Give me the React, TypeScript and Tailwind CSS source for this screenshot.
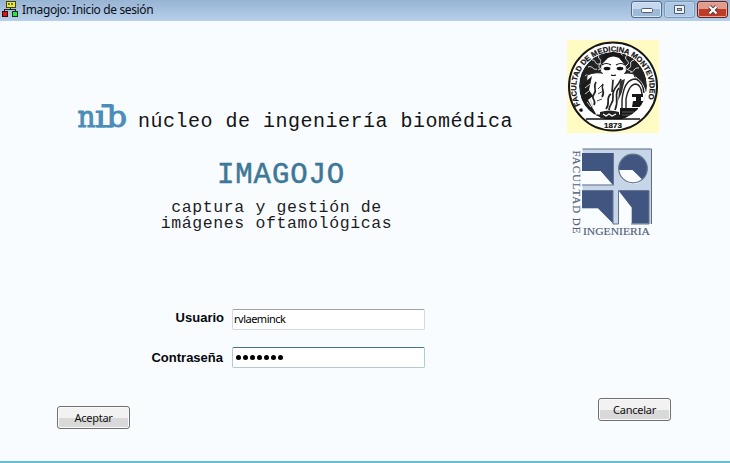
import React from "react";

function AppIcon() {
  return (
    <svg className="ml-0.5 block h-[18px] w-4 shrink-0" viewBox="0 0 16 18" shapeRendering="crispEdges">
      <path d="M8 7v3M2.5 12v-2.5h11V12" fill="none" stroke="#222" />
      <rect x="4" y="1" width="9" height="6" fill="#e8e840" stroke="#44440c" />
      <rect x="6" y="3" width="5" height="2" fill="#6b7a20" />
      <rect x="8" y="3" width="1" height="2" fill="#f6f67a" />
      <rect x="0.5" y="11.5" width="5" height="5" fill="#d81414" stroke="#3a0a0a" />
      <rect x="10.5" y="11.5" width="5" height="5" fill="#2fe04a" stroke="#0b3a12" />
    </svg>
  );
}

function TitleBar() {
  return (
    <header className="flex h-[21px] items-start bg-linear-to-b from-[#98b4d3] to-[#b7cfe9]">
      <AppIcon />
      <h1 className="ml-1 pt-[2px] font-['Noto_Sans',sans-serif] text-[12px] leading-4 tracking-[-0.37px] text-[#0b0f18]">
        Imagojo: Inicio de sesión
      </h1>
      <div className="mt-px mr-[2px] ml-auto flex gap-[2px]">
        <button className="flex h-[17px] w-[31px] items-center justify-center rounded-[3px] border border-[#506a8c] bg-linear-to-b from-[#c5d8ed] from-50% to-[#9dbad9] to-50% shadow-[inset_0_0_0_1px_#d8e6f4]" aria-label="Minimizar">
          <svg className="mt-[3px] h-[6px] w-3" viewBox="0 0 12 6">
            <rect x="0.5" y="0.5" width="11" height="4" rx="1" fill="#fff" stroke="#535c6b" />
          </svg>
        </button>
        <button className="flex h-[17px] w-[31px] items-center justify-center rounded-[3px] border border-[#7f9bbb] bg-[#adc8e4] shadow-[inset_0_0_0_1px_#bed4ea]" aria-label="Maximizar">
          <svg className="h-[9px] w-[11px]" viewBox="0 0 11 9">
            <rect x="0.5" y="0.5" width="10" height="8" rx="0.5" fill="#eef3f8" stroke="#535c6b" />
            <rect x="3.5" y="3.5" width="4" height="2" fill="#b9cce0" stroke="#535c6b" />
          </svg>
        </button>
        <button className="flex h-[17px] w-[31px] items-center justify-center rounded-[3px] border border-[#64231f] bg-linear-to-b from-[#df9c8d] from-45% to-[#be3b26] to-50% shadow-[inset_0_0_0_1px_#e8a99c]" aria-label="Cerrar">
          <svg className="h-[10px] w-3" viewBox="0 0 12 10">
            <path d="M2.5 1.5l7 7M9.5 1.5l-7 7" stroke="#523d45" strokeWidth="4" />
            <path d="M2.5 1.5l7 7M9.5 1.5l-7 7" stroke="#fff" strokeWidth="2.2" />
          </svg>
        </button>
      </div>
    </header>
  );
}

function NibLogo() {
  return (
    <svg className="-my-2 block h-12 w-[52px] shrink-0" viewBox="0 -8 52 48">
      <g fill="#4b8db9" stroke="#4b8db9" strokeWidth="1" fontFamily="'DejaVu Serif', serif" fontSize="29">
        <text x="0.6" y="25" textLength="18" lengthAdjust="spacingAndGlyphs">n</text>
        <text x="18" y="25" textLength="11" lengthAdjust="spacingAndGlyphs">ı</text>
        <text x="29.5" y="25" textLength="20.5" lengthAdjust="spacingAndGlyphs">b</text>
        <path d="M24.5 2H35v3.5H24.5zM20 23h15v2.5H20z" stroke="none" />
      </g>
    </svg>
  );
}

function MedicineSeal() {
  return (
    <svg className="block h-[93px] w-[92px]" viewBox="0 0 92 93">
      <defs>
        <path id="seal-arc" d="M17.5 71.5A36.7 36.7 0 1 1 75.5 70" />
        <clipPath id="seal-inner">
          <circle cx="46" cy="46" r="34" />
        </clipPath>
      </defs>
      <rect width="92" height="93" fill="#fffbc3" />
      <circle cx="46" cy="46.5" r="44" fill="#fff" stroke="#161616" strokeWidth="2" />
      <text fontFamily="'Liberation Sans', sans-serif" fontSize="7.6" fontWeight="700" fill="#111" stroke="#111" strokeWidth="0.2">
        <textPath href="#seal-arc" startOffset="1" textLength="150">● FACULTAD DE MEDICINA MONTEVIDEO</textPath>
      </text>
      <g clipPath="url(#seal-inner)">
        <circle cx="46" cy="46" r="34" fill="#222" />
        <path
          d="M25 20c5 0 2 5 7 4s3 5-1 6M21 27c5-2 5 4 9 2M33 14c-5 5 4 5 0 10s4 5 1 8M53 12c5 5-2 7 3 12M60 15c-5 5 5 6 0 10s3 5 5 7M67 20c-7 2 0 6-6 9M72 28c-6-1-4 5-9 4M18 36c5-4 6 2 10-2M70 38c-4-4-6 1-9-1"
          fill="none"
          stroke="#ddd"
        />
        <path d="M20 35q10-4 18-1l8 6 7-6q9-2 14 0l4 16-8 25H18z" fill="#fff" stroke="#222" />
        <path d="M35 24q2-10 11-10t12 10l1 7q-4 7-13 9-8-2-12-9z" fill="#fff" />
        <path d="M34 25q0-13 12-13t12 13l-6-7q-6-3-11 0z" fill="#181818" />
        <path d="M35 25q4-3 9 0M49 25q5-3 9 0M44 35q2 1 5 0" fill="none" stroke="#111" strokeWidth="1.2" />
        <ellipse cx="40" cy="28.5" rx="3.4" ry="1.8" fill="#111" />
        <ellipse cx="53" cy="28.5" rx="3.4" ry="1.8" fill="#111" />
        <path d="M46 40l-1 12M54 39c-3 8-9 9-8 17s-4 8-4 14M52 48c-6 7 1 10-4 22M44 54c-6 4 0 9-5 15M29 42c-4 6 2 7-2 12s3 6 0 11M36 44c-3 5 3 7-1 13" fill="none" stroke="#222" strokeWidth="1.7" />
        <path d="M53 41l5-2-3 13-4 9z" fill="#333" />
        <path d="M15 45l10-9-3 14 4 6-5 4 8 14H14z" fill="#1a1a1a" />
        <path d="M18 48l5-4M18 54l4-3M20 62l4 5M23 59l3 8" stroke="#ccc" />
        <path d="M31 49l4-4M31 54l5-3M30 61l5-2" stroke="#444" />
        <path d="M54 73q-1-33 13-36 14 3 14 36z" fill="#fff" />
        <path d="M55 69V60q2-21 14-21 7 3 8 14M59 68V59q3-15 10-15 5 1 6 10" fill="none" stroke="#222" strokeWidth="1.4" />
        <path d="M65 54h11v3H65zM66 61h12v6H65zM53 68h18v11H53zM69 57h5v5h-5z" fill="#171717" />
        <path d="M55 72h12M55 75h12" stroke="#777" strokeWidth="0.7" />
        <path d="M33 72q10-3 19 0v6H33z" fill="#222" />
        <path d="M36 74l3 2 3-2 3 2 4-2" fill="none" stroke="#fff" strokeWidth="1.2" />
        <path d="M12 79h68v6H12z" fill="#fff" />
      </g>
      <path d="M19 79h54" stroke="#111" strokeWidth="1.3" />
      <text x="37" y="88" fontFamily="'Liberation Sans', sans-serif" fontSize="8" fontWeight="700" fill="#111" stroke="#111" strokeWidth="0.2" textLength="18">1873</text>
    </svg>
  );
}

function EngineeringLogo() {
  return (
    <svg className="block h-[91px] w-[84px]" viewBox="0 0 84 91">
      <rect x="12.5" y="2" width="69" height="75" fill="#c7d5e8" />
      <path d="M12.5 2H81.5V77" fill="none" stroke="#5d6b83" />
      <g fill="#405681">
        <path d="M12 6h31V38L30.5 24H12zM12 43.5h31V77L28 61.5H12zM49 43.5H79V76.5H61.5V60.5L49 44z" />
      </g>
      <g fill="#fafdff">
        <path d="M12 24h18.5L42 37.5H12zM12 61.5h16L43 76.5V78H12zM49 45l12.5 15.5V78H49z" />
      </g>
      <path d="M12 38h31.5V6M12 43.5h31V77h5.5V43.5h30.5V77H61" fill="none" stroke="#65748d" />
      <circle cx="63" cy="21.5" r="14.2" fill="#405681" />
      <path d="M48.8 23H62.5l10.2 10A14.2 14.2 0 0 1 48.8 23z" fill="#fafdff" />
      <circle cx="63" cy="21.5" r="14.3" fill="none" stroke="#65748d" strokeWidth="1.2" />
      <g fontFamily="'Liberation Serif', serif" fontSize="11" fill="#526078" stroke="#526078" strokeWidth="0.15">
        <text transform="translate(2.5 3.5) rotate(90)" textLength="83">FACULTAD DE</text>
        <text x="13" y="87.6" textLength="67" lengthAdjust="spacingAndGlyphs">INGENIERIA</text>
      </g>
    </svg>
  );
}

function DialogButton({ children }: { children: React.ReactNode }) {
  return (
    <button className="block h-[23px] w-[73px] rounded-[3px] border border-[#707070] bg-linear-to-b from-[#f2f2f2] from-50% to-[#d9d9d9] to-50% font-['Noto_Sans',sans-serif] text-[11px] leading-5 tracking-[-0.25px] text-[#111] shadow-[inset_0_0_0_1px_#fafafa]">
      {children}
    </button>
  );
}

export default function App() {
  return (
    <div className="flex h-[463px] w-[730px] flex-col overflow-hidden bg-[#f8fcff]">
      <TitleBar />
      <main className="flex min-h-0 flex-1 flex-col border-b-2 border-[#5fc0d8]">
        <section className="flex h-[285px]">
          <div className="w-[567px] pt-[81px] font-['Liberation_Mono',monospace]">
            <div className="flex h-[34px] items-start pl-[77px]">
              <NibLogo />
              <p className="mt-[6px] ml-[9px] text-[20px] leading-7 tracking-[0.5px] whitespace-nowrap text-[#151515]">
                núcleo de ingeniería biomédica
              </p>
            </div>
            <h2 className="mt-[24px] ml-[217px] text-[29px] leading-8 tracking-[0.9px] text-[#3d7898] [-webkit-text-stroke:0.5px_#3d7898]">
              IMAGOJO
            </h2>
            <div className="mt-[8px] w-[553px] text-center text-[16.5px] leading-4 tracking-[0.63px] whitespace-nowrap text-[#1d1d1d]">
              <p>captura y gestión de</p>
              <p>imágenes oftamológicas</p>
            </div>
          </div>
          <aside className="pt-[19px]">
            <MedicineSeal />
            <div className="mt-[14px] ml-[3px]">
              <EngineeringLogo />
            </div>
          </aside>
        </section>
        <form className="grid grid-cols-[224px_193px] gap-x-2 gap-y-[17px] pt-[3px]">
          <label className="pt-px text-right font-['Liberation_Sans',sans-serif] text-[13px] leading-4 font-bold text-[#05070c]">Usuario</label>
          <div className="h-[21px] rounded-[2px] border border-[#d3d9df] border-t-[#9fa4ab] bg-white pl-px font-['Noto_Sans',sans-serif] text-[11px] leading-[18px] tracking-[-0.5px] text-black">
            rvlaeminck
          </div>
          <label className="pt-[3px] pr-px text-right font-['Liberation_Sans',sans-serif] text-[13px] leading-4 font-bold text-[#05070c]">Contraseña</label>
          <div className="flex h-[21px] items-center gap-[2px] rounded-[2px] border border-[#aecbd6] border-t-[#4b7190] bg-white pl-[3px]">
            {[0, 1, 2, 3, 4, 5, 6].map((dot) => (
              <span key={dot} className="h-[5px] w-[5px] rounded-full bg-black" />
            ))}
          </div>
        </form>
        <footer className="mt-[30px] flex items-start justify-between pr-[59px] pl-[57px]">
          <div className="pt-2">
            <DialogButton>Aceptar</DialogButton>
          </div>
          <DialogButton>Cancelar</DialogButton>
        </footer>
      </main>
    </div>
  );
}
